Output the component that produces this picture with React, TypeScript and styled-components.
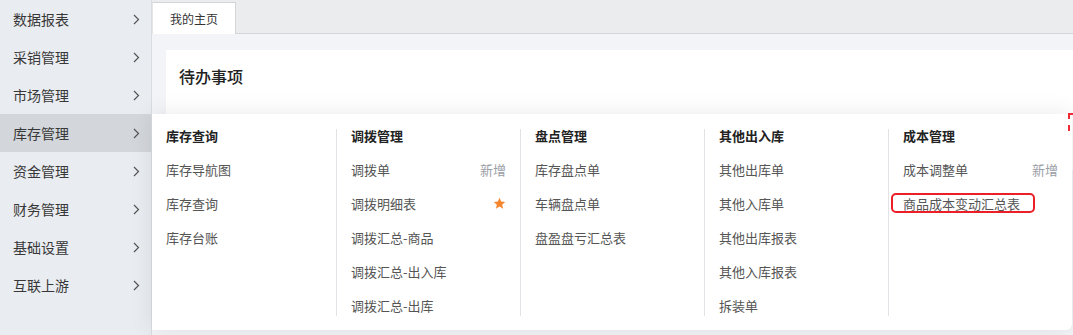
import React from "react";
import styled, { createGlobalStyle } from "styled-components";

type MenuItem = {
  label: string;
  extra?: "add" | "star";
  highlight?: boolean;
};

type MenuColumn = {
  title: string;
  items: MenuItem[];
};

const sideMenu = [
  "数据报表",
  "采销管理",
  "市场管理",
  "库存管理",
  "资金管理",
  "财务管理",
  "基础设置",
  "互联上游",
];

const columns: MenuColumn[] = [
  {
    title: "库存查询",
    items: [{ label: "库存导航图" }, { label: "库存查询" }, { label: "库存台账" }],
  },
  {
    title: "调拨管理",
    items: [
      { label: "调拨单", extra: "add" },
      { label: "调拨明细表", extra: "star" },
      { label: "调拨汇总-商品" },
      { label: "调拨汇总-出入库" },
      { label: "调拨汇总-出库" },
    ],
  },
  {
    title: "盘点管理",
    items: [{ label: "库存盘点单" }, { label: "车辆盘点单" }, { label: "盘盈盘亏汇总表" }],
  },
  {
    title: "其他出入库",
    items: [
      { label: "其他出库单" },
      { label: "其他入库单" },
      { label: "其他出库报表" },
      { label: "其他入库报表" },
      { label: "拆装单" },
    ],
  },
  {
    title: "成本管理",
    items: [
      { label: "成本调整单", extra: "add" },
      { label: "商品成本变动汇总表", highlight: true },
    ],
  },
];

const App = () => {
  return (
    <>
      <GlobalStyle />
      <Layout>
        <Sidebar>
          {sideMenu.map((name) => (
            <SideItem key={name} $active={name === "库存管理"}>
              <span>{name}</span>
              <svg width="7" height="11" viewBox="0 0 7 11">
                <polyline
                  points="1,1 5.5,5.5 1,10"
                  fill="none"
                  stroke="#555"
                  strokeWidth="1.2"
                />
              </svg>
            </SideItem>
          ))}
        </Sidebar>
        <Main>
          <TabBar>
            <Tab>我的主页</Tab>
          </TabBar>
          <Content>
            <Card>
              <CardTitle>待办事项</CardTitle>
            </Card>
          </Content>
          <Dropdown>
            {columns.map((col) => (
              <Column key={col.title}>
                <ColumnTitle>{col.title}</ColumnTitle>
                {col.items.map((item) => (
                  <Item key={item.label} $highlight={item.highlight}>
                    <span>{item.label}</span>
                    {item.extra === "add" && <AddLink>新增</AddLink>}
                    {item.extra === "star" && (
                      <svg width="13" height="13" viewBox="0 0 24 24">
                        <path
                          d="M12 1.5l3.1 6.9 7.4.7-5.6 5 1.7 7.4L12 17.6l-6.6 3.9 1.7-7.4-5.6-5 7.4-.7z"
                          fill="#f5862d"
                        />
                      </svg>
                    )}
                  </Item>
                ))}
              </Column>
            ))}
            <DashMark />
          </Dropdown>
        </Main>
      </Layout>
    </>
  );
};

const GlobalStyle = createGlobalStyle`
  body {
    margin: 0;
    font-family: "Noto Sans CJK SC", "Noto Sans", sans-serif;
    background: #f3f4f7;
    overflow: hidden;
  }
`;

const Layout = styled.div`
  display: flex;
  width: 1073px;
  height: 335px;
`;

const Sidebar = styled.nav`
  width: 151px;
  flex-shrink: 0;
  background-color: #e9ecf0;
  border-right: 1px solid #d9dce1;
`;

const SideItem = styled.div<{ $active?: boolean }>`
  height: 38px;
  display: flex;
  align-items: center;
  justify-content: space-between;
  padding: 0 11px 0 13px;
  font-size: 14px;
  color: #383838;
  background-color: ${(p) => (p.$active ? "#d3d6db" : "transparent")};
`;

const Main = styled.div`
  position: relative;
  flex: 1;
  display: flex;
  flex-direction: column;
  min-width: 0;
`;

const TabBar = styled.div`
  height: 34px;
  display: flex;
  align-items: flex-end;
  background-color: #ebecee;
  border-bottom: 1px solid #d4d5d8;
  box-sizing: border-box;
`;

const Tab = styled.div`
  width: 84px;
  height: 32px;
  margin-bottom: -1px;
  box-sizing: border-box;
  display: flex;
  align-items: center;
  padding-left: 17px;
  font-size: 12px;
  color: #333;
  background-color: #fff;
  border: 1px solid #d4d5d8;
  border-bottom: none;
  border-left-color: #e6e6e6;
`;

const Content = styled.div`
  flex: 1;
  padding: 16px 0 0 14px;
  background-color: #f3f4f7;
`;

const Card = styled.div`
  background-color: #fff;
  height: 120px;
  padding: 14px 13px;
  box-sizing: border-box;
`;

const CardTitle = styled.h2`
  margin: 0;
  font-size: 16px;
  font-weight: 500;
  color: #222;
  line-height: 24px;
`;

const Dropdown = styled.div`
  position: absolute;
  left: 0;
  top: 114px;
  width: 920px;
  height: 216px;
  box-sizing: border-box;
  padding: 15px 0 14px;
  display: grid;
  grid-template-columns: repeat(5, 1fr);
  background-color: #fff;
  border-radius: 0 0 6px 0;
  box-shadow: 0 0 24px rgba(0, 0, 0, 0.09);
`;

const Column = styled.div`
  display: flex;
  flex-direction: column;
  gap: 14px;
  padding: 0 14px;
  & + & {
    border-left: 1px solid #e2e3e6;
    padding-left: 14px;
  }
`;

const ColumnTitle = styled.div`
  font-size: 13px;
  font-weight: 700;
  color: #222;
  line-height: 14px;
  margin-bottom: 2px;
`;

const Item = styled.div<{ $highlight?: boolean }>`
  height: 20px;
  display: flex;
  align-items: center;
  justify-content: space-between;
  font-size: 13px;
  color: #555;
  box-sizing: border-box;
  ${(p) =>
    p.$highlight &&
    `
    align-self: flex-start;
    margin-left: -12px;
    padding: 0 13px 0 10px;
    border: 2px solid #ea1f28;
    border-radius: 5px;
  `}
`;

const AddLink = styled.span`
  color: #9a9ea5;
`;

const DashMark = styled.div`
  position: absolute;
  right: -6px;
  top: -1px;
  width: 8px;
  height: 16px;
  border-left: 2px dashed #ee2a36;
  border-top: 2px dashed #ee2a36;
`;

export default App;
